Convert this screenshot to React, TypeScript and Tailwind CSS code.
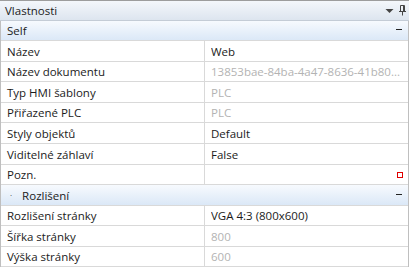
type Item = { label: string; value: string; muted?: boolean; note?: boolean; tall?: boolean };

const rows1: Item[] = [
  { label: "Název", value: "Web", tall: true },
  { label: "Název dokumentu", value: "13853bae-84ba-4a47-8636-41b80...", muted: true },
  { label: "Typ HMI šablony", value: "PLC", muted: true, tall: true },
  { label: "Přiřazené PLC", value: "PLC", muted: true },
  { label: "Styly objektů", value: "Default", tall: true },
  { label: "Viditelné záhlaví", value: "False", tall: true },
  { label: "Pozn.", value: "", note: true },
];

const rows2: Item[] = [
  { label: "Rozlišení stránky", value: "VGA 4:3 (800x600)" },
  { label: "Šířka stránky", value: "800", muted: true, tall: true },
  { label: "Výška stránky", value: "600", muted: true },
];

function Row({ label, value, muted, note, tall }: Item) {
  return (
    <div className={`flex border-b border-[#d9d9d9] bg-white ${tall ? "h-[21px]" : "h-[20px]"}`}>
      <div className="flex w-[204px] shrink-0 items-center border-r border-[#d9d9d9] pl-[6px] text-[#1b1b1b]">{label}</div>
      <div className={`flex min-w-0 flex-1 items-center pl-[6px] pr-[5px] ${muted ? "text-[#b3b3b3]" : "text-[#1b1b1b]"}`}>
        <span className="flex-1 overflow-hidden whitespace-nowrap">{value}</span>
        {note ? <span className="h-[6px] w-[6px] border border-[#e00000]" /> : null}
      </div>
    </div>
  );
}

function Category({ title, dot, tall }: { title: string; dot?: boolean; tall?: boolean }) {
  return (
    <div
      className={`flex items-center border-b border-[#d9d9d9] bg-gradient-to-b from-[#f7fafe] to-[#dbe8f7] pl-[6px] pr-[6px] text-[#1b1b1b] ${tall ? "h-[21px]" : "h-[20px]"}`}
    >
      {dot ? <span className="ml-[3px] mr-[10px] text-[8px] leading-none">·</span> : null}
      <span className="flex-1">{title}</span>
      <span className="mb-[2px] h-[1px] w-[6px] bg-[#222]" />
    </div>
  );
}

export default function App() {
  return (
    <div className="h-[270px] w-[409px] overflow-hidden bg-white text-[11.5px] leading-[15px] [font-family:'Open_Sans',sans-serif]">
      <div className="flex h-[21px] items-center border-t border-b border-t-[#9d9d9d] border-b-[#c4ccd6] bg-gradient-to-b from-[#f4f7fb] to-[#dde5ef] pl-[5px] pr-[3px] text-[#1b1b1b]">
        <span className="flex-1">Vlastnosti</span>
        <svg width="9" height="6" viewBox="0 0 9 6" className="mr-[5px]">
          <path d="M0.5 1h8L4.5 5z" fill="#444" />
        </svg>
        <svg width="7" height="11" viewBox="0 0 7 11">
          <path d="M1.5 0.5h4v6h-4z M0 6.5h7 M3.5 6.5v4" stroke="#444" strokeWidth="1" fill="none" />
          <path d="M4 1h1v5h-1z" fill="#444" />
        </svg>
      </div>
      <div className="border-l border-r border-[#bfbfbf]">
        <Category title="Self" />
        {rows1.map((r) => (
          <Row key={r.label} {...r} />
        ))}
        <Category title="Rozlišení" dot tall />
        {rows2.map((r) => (
          <Row key={r.label} {...r} />
        ))}
      </div>
    </div>
  );
}
